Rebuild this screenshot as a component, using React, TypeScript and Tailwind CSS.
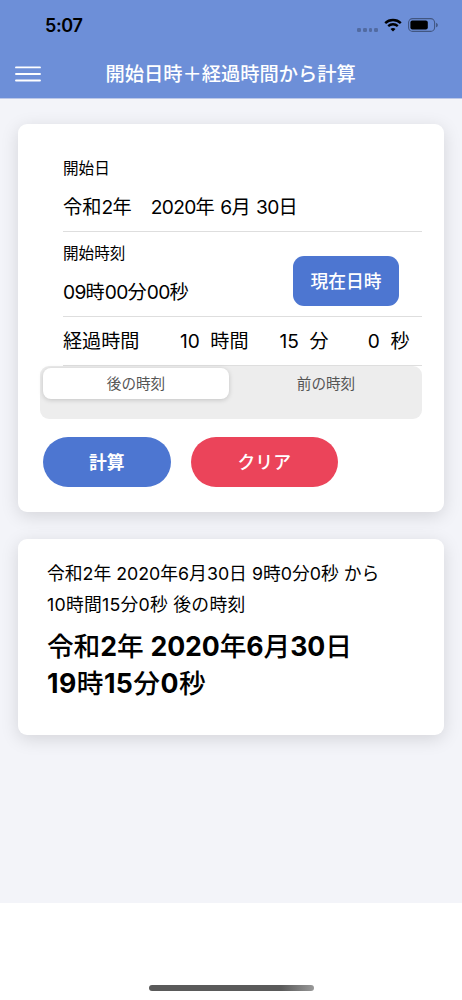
import { useState } from 'react';

const durations = [
  { value: '10', unit: '時間', box: 'w-[109.5px]' },
  { value: '15', unit: '分', box: 'w-[80px]' },
  { value: '0', unit: '秒', box: 'w-[81px]' },
];

const segments = [
  { id: 'after', label: '後の時刻' },
  { id: 'before', label: '前の時刻' },
];

// gives the digits their own weight and tracking inside Japanese text
const MixedText = ({ text, digits, kanji = '' }: { text: string; digits: string; kanji?: string }) => (
  <>
    {text.split(/(\d+)/).map((part, i) => (
      <span key={i} className={/\d/.test(part) ? digits : kanji}>{part}</span>
    ))}
  </>
);

const StatusBar = () => (
  <div className="h-[50px] flex items-center justify-between pl-[45px] pr-[23px] text-black">
    <span className="text-[18px] leading-[26px] font-semibold tracking-[-0.4px] mt-[3px]">5:07</span>
    <div className="flex items-center mt-px">
      <div className="flex gap-[2px] mr-[6px] mt-[9px]">
        {[0, 1, 2, 3].map((i) => (
          <span key={i} className="w-[3.7px] h-[3.7px] rounded-[1.2px] bg-black/25" />
        ))}
      </div>
      <svg className="mr-[6px]" width="18" height="14" viewBox="0 0 18 14" fill="none">
        <path d="M1.2 5.1C5.5.9 12.5.9 16.8 5.1" stroke="#000" strokeWidth="2.4" />
        <path d="M4.2 8.2C6.9 5.6 11.1 5.6 13.8 8.2" stroke="#000" strokeWidth="2.3" />
        <path d="M9 13.4 6.5 10.9C7.9 9.6 10.1 9.6 11.5 10.9Z" fill="#000" />
      </svg>
      <svg width="31" height="14" viewBox="0 0 31 14">
        <rect x=".6" y=".6" width="26" height="12.8" rx="4" fill="none" stroke="#000" strokeOpacity=".4" strokeWidth="1.1" />
        <rect x="2.4" y="2.4" width="17.4" height="9.2" rx="2" fill="#000" />
        <path d="M28.2 4.7C30.2 5.5 30.2 8.5 28.2 9.3Z" fill="#000" fillOpacity=".45" />
      </svg>
    </div>
  </div>
);

export default function App() {
  const [mode, setMode] = useState('after');

  return (
    <div className="w-[462px] h-[1000px] flex flex-col bg-white text-black overflow-hidden font-['Inter','Noto_Sans_CJK_JP',sans-serif]">
      <header className="h-[99px] shrink-0 bg-[#6d8fd8] border-b border-[#bcc8e8] flex flex-col">
        <StatusBar />
        <div className="h-[49px] flex items-center pl-[15px]">
          <button className="w-[26px]" aria-label="menu">
            <svg width="26" height="16" viewBox="0 0 26 16" stroke="#fff" strokeWidth="1.9" strokeLinecap="round">
              <path d="M1 1.4H25M1 8H25M1 14.5H25" />
            </svg>
          </button>
          <h1 className="ml-[64.5px] mt-px text-[19.25px] leading-[28px] font-medium text-white whitespace-nowrap">開始日時＋経過時間から計算</h1>
        </div>
      </header>

      <main className="h-[804px] shrink-0 bg-[#f3f4f9] px-[18px] pt-[25px]">
        <section className="h-[388px] rounded-[9px] bg-white shadow-[0_4px_18px_rgba(0,0,0,0.13)] pl-[22px] pr-[22px] pt-[23px]">
          <div className="ml-[23px]">
            <div className="h-[85px] border-b border-[#dedede] pt-[11px]">
              <p className="text-[15.6px] leading-[22px]">開始日</p>
              <p className="mt-[13px] text-[19.2px] leading-[28px] whitespace-pre">
                <MixedText text="令和2年　2020年 6月 30日" digits="tracking-[-0.7px]" />
              </p>
            </div>
            <div className="h-[85px] border-b border-[#dedede] flex justify-between pr-[23px]">
              <div className="pt-[11px]">
                <p className="text-[15.6px] leading-[22px]">開始時刻</p>
                <p className="mt-[13px] text-[19.2px] leading-[28px]">
                  <MixedText text="09時00分00秒" digits="tracking-[-0.7px]" />
                </p>
              </div>
              <button className="mt-[24px] w-[106px] h-[50px] rounded-[11px] bg-[#4d76d1] text-white text-[17.8px] font-medium pt-[2px]">現在日時</button>
            </div>
            <div className="h-[49px] border-b border-[#dedede] flex items-center text-[19.1px] leading-[28px] whitespace-nowrap">
              <span className="w-[76px]">経過時間</span>
              {durations.map((d) => (
                <span key={d.unit} className={`${d.box} flex justify-end gap-[10.5px]`}>
                  <span>{d.value}</span>
                  <span>{d.unit}</span>
                </span>
              ))}
            </div>
          </div>

          <div className="h-[53px] rounded-[9px] bg-[#ededed] pt-[2px] pl-[3px] pr-[3px] flex items-start gap-[4px]">
            {segments.map((s) => (
              <button
                key={s.id}
                onClick={() => setMode(s.id)}
                className={`h-[31px] flex-1 rounded-[8px] text-[14.6px] leading-[31px] pt-px text-[#555] ${mode === s.id ? 'bg-white shadow-[0_1px_5px_rgba(0,0,0,0.18)]' : ''}`}
              >
                {s.label}
              </button>
            ))}
          </div>

          <div className="flex gap-[20px] mt-[18px] ml-[2.5px] text-white text-[17.8px]">
            <button className="w-[128.5px] h-[50px] rounded-full bg-[#4d76d1] font-bold pt-[2px]">計算</button>
            <button className="w-[146.5px] h-[50px] rounded-full bg-[#eb445a] font-medium pt-[2px]">クリア</button>
          </div>
        </section>

        <section className="mt-[27px] h-[196px] rounded-[9px] bg-white shadow-[0_4px_18px_rgba(0,0,0,0.13)] pl-[29px] pt-[19px]">
          <p className="text-[17.8px] leading-[31px]">令和2年 2020年6月30日 9時0分0秒 から</p>
          <p className="text-[17.8px] leading-[31px] tracking-[0.25px]">10時間15分0秒 後の時刻</p>
          <p className="mt-[8px] text-[26.7px] leading-[37px] tracking-[-0.1px]">
            <MixedText text="令和2年 2020年6月30日" digits="font-bold" kanji="font-medium" />
          </p>
          <p className="text-[26.7px] leading-[37px] tracking-[0.45px]">
            <MixedText text="19時15分0秒" digits="font-bold" kanji="font-medium" />
          </p>
        </section>
      </main>

      <footer className="flex-1 flex items-end justify-center pb-[9px]">
        <div className="w-[165px] h-[6px] rounded-full bg-linear-to-r from-[#5a5a5a] from-80% to-[#999]" />
      </footer>
    </div>
  );
}
